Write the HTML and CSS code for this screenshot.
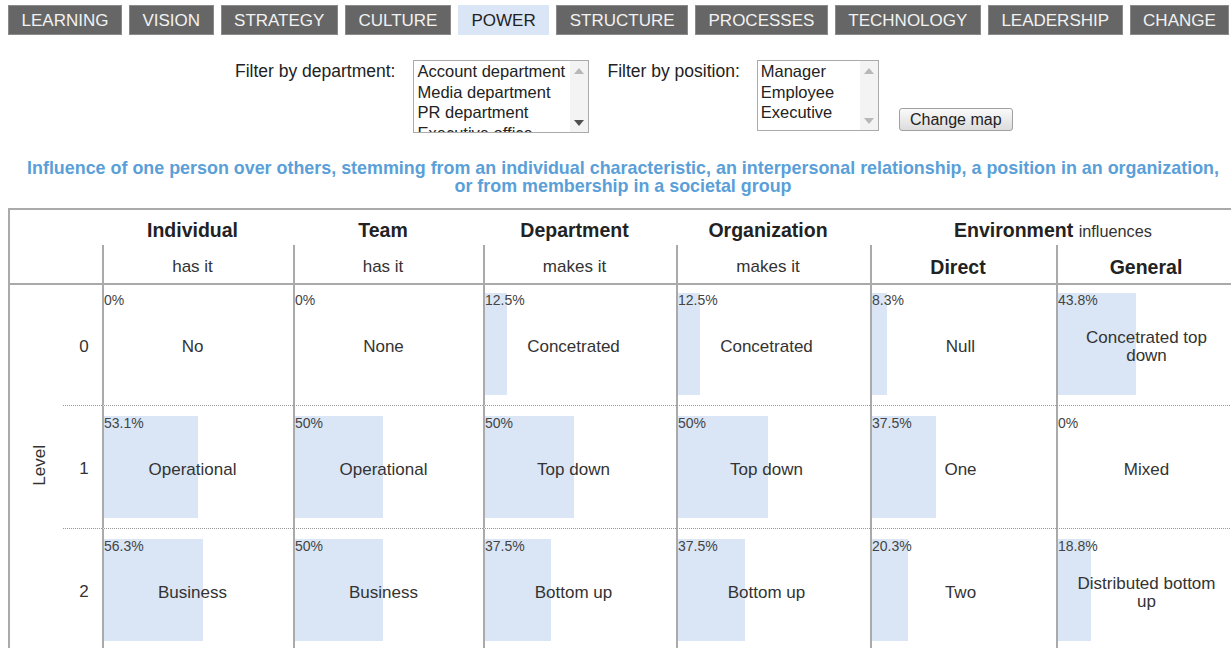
FILE: index.html
```html
<!DOCTYPE html>
<html lang="en">
<head>
<meta charset="utf-8">
<title>Power map</title>
<link rel="stylesheet" href="styles.css">
</head>
<body>
<div class="page">
  <nav class="tabs">
    <a class="tab">LEARNING</a>
    <a class="tab">VISION</a>
    <a class="tab">STRATEGY</a>
    <a class="tab">CULTURE</a>
    <a class="tab active">POWER</a>
    <a class="tab">STRUCTURE</a>
    <a class="tab">PROCESSES</a>
    <a class="tab">TECHNOLOGY</a>
    <a class="tab">LEADERSHIP</a>
    <a class="tab">CHANGE</a>
  </nav>

  <div class="filters">
    <span class="flabel">Filter by department:</span>
    <div class="listbox lb-dept">
      <ul class="items">
        <li>Account department</li>
        <li>Media department</li>
        <li>PR department</li>
        <li>Executive office</li>
      </ul>
      <div class="sbar">
        <svg class="arr up light" width="10" height="6" viewBox="0 0 10 6"><polygon points="0,6 5,0 10,6"/></svg>
        <svg class="arr down dark" width="10" height="6" viewBox="0 0 10 6"><polygon points="0,0 10,0 5,6"/></svg>
      </div>
    </div>
    <span class="flabel flabel-pos">Filter by position:</span>
    <div class="listbox lb-pos">
      <ul class="items">
        <li>Manager</li>
        <li>Employee</li>
        <li>Executive</li>
      </ul>
      <div class="sbar">
        <svg class="arr up light" width="10" height="6" viewBox="0 0 10 6"><polygon points="0,6 5,0 10,6"/></svg>
        <svg class="arr down light" width="10" height="6" viewBox="0 0 10 6"><polygon points="0,0 10,0 5,6"/></svg>
      </div>
    </div>
    <button class="btn">Change map</button>
  </div>

  <p class="intro">Influence of one person over others, stemming from an individual characteristic, an interpersonal relationship, a position in an organization,<br>or from membership in a societal group</p>

  <div class="map">
    <div class="level"><span class="vtext">Level</span></div>

    <div class="hd1 blank"></div>
    <div class="hd1">Individual</div>
    <div class="hd1">Team</div>
    <div class="hd1">Department</div>
    <div class="hd1">Organization</div>
    <div class="hd1 env"><b>Environment</b>&nbsp;<span class="small">influences</span></div>

    <div class="hd2 blank"></div>
    <div class="hd2">has it</div>
    <div class="hd2">has it</div>
    <div class="hd2">makes it</div>
    <div class="hd2">makes it</div>
    <div class="hd2 strong">Direct</div>
    <div class="hd2 strong">General</div>

    <div class="num first">0</div>
    <div class="cell first"><div class="box"><div class="bar" style="width:0px"></div><span class="pct">0%</span><span class="lbl">No</span></div></div>
    <div class="cell first"><div class="box"><div class="bar" style="width:0px"></div><span class="pct">0%</span><span class="lbl">None</span></div></div>
    <div class="cell first"><div class="box"><div class="bar" style="width:22px"></div><span class="pct">12.5%</span><span class="lbl">Concetrated</span></div></div>
    <div class="cell first"><div class="box"><div class="bar" style="width:22px"></div><span class="pct">12.5%</span><span class="lbl">Concetrated</span></div></div>
    <div class="cell first"><div class="box"><div class="bar" style="width:15px"></div><span class="pct">8.3%</span><span class="lbl">Null</span></div></div>
    <div class="cell first"><div class="box"><div class="bar" style="width:78px"></div><span class="pct">43.8%</span><span class="lbl">Concetrated top down</span></div></div>

    <div class="num">1</div>
    <div class="cell"><div class="box"><div class="bar" style="width:94px"></div><span class="pct">53.1%</span><span class="lbl">Operational</span></div></div>
    <div class="cell"><div class="box"><div class="bar" style="width:88px"></div><span class="pct">50%</span><span class="lbl">Operational</span></div></div>
    <div class="cell"><div class="box"><div class="bar" style="width:89px"></div><span class="pct">50%</span><span class="lbl">Top down</span></div></div>
    <div class="cell"><div class="box"><div class="bar" style="width:90px"></div><span class="pct">50%</span><span class="lbl">Top down</span></div></div>
    <div class="cell"><div class="box"><div class="bar" style="width:64px"></div><span class="pct">37.5%</span><span class="lbl">One</span></div></div>
    <div class="cell"><div class="box"><div class="bar" style="width:0px"></div><span class="pct">0%</span><span class="lbl">Mixed</span></div></div>

    <div class="num">2</div>
    <div class="cell"><div class="box"><div class="bar" style="width:99px"></div><span class="pct">56.3%</span><span class="lbl">Business</span></div></div>
    <div class="cell"><div class="box"><div class="bar" style="width:88px"></div><span class="pct">50%</span><span class="lbl">Business</span></div></div>
    <div class="cell"><div class="box"><div class="bar" style="width:66px"></div><span class="pct">37.5%</span><span class="lbl">Bottom up</span></div></div>
    <div class="cell"><div class="box"><div class="bar" style="width:67px"></div><span class="pct">37.5%</span><span class="lbl">Bottom up</span></div></div>
    <div class="cell"><div class="box"><div class="bar" style="width:36px"></div><span class="pct">20.3%</span><span class="lbl">Two</span></div></div>
    <div class="cell"><div class="box"><div class="bar" style="width:33px"></div><span class="pct">18.8%</span><span class="lbl">Distributed bottom up</span></div></div>
  </div>
</div>
</body>
</html>
```

FILE: styles.css
```css
html, body {
  margin: 0;
  padding: 0;
  overflow: hidden;
  background: #fff;
}

body {
  font-family: "Liberation Sans", Arial, sans-serif;
  color: #333;
}

.page {
  padding: 5px 0 0 8px;
  width: max-content;
}

/* Navigation tabs */
.tabs {
  display: flex;
  gap: 7px;
}

.tab {
  display: block;
  box-sizing: border-box;
  height: 30px;
  padding: 0 12.5px;
  border: 1px solid #8a8a8a;
  background: #666;
  color: #f2f2f2;
  font-size: 17px;
  line-height: 29px;
  white-space: nowrap;
}

.tab.active {
  background: #dae6f6;
  border-color: #dae6f6;
  color: #222;
}

/* Filters */
.filters {
  display: flex;
  align-items: flex-start;
  margin-top: 25px;
  padding-left: 227px;
}

.flabel {
  font-size: 17.5px;
  line-height: 20px;
  padding-top: 1px;
  color: #222;
  white-space: nowrap;
  margin-right: 18px;
}

.flabel-pos {
  margin-left: 18px;
  margin-right: 17px;
}

.listbox {
  box-sizing: border-box;
  display: flex;
  border: 1px solid #aaa;
  background: #fff;
  overflow: hidden;
}

.lb-dept {
  width: 176px;
  height: 73px;
}

.lb-pos {
  width: 122px;
  height: 71px;
}

.items {
  list-style: none;
  margin: 0;
  padding: 0 0 0 3px;
  flex: 1;
  font-size: 16.5px;
  line-height: 20.5px;
  color: #222;
  white-space: nowrap;
  overflow: hidden;
}

.sbar {
  width: 18px;
  background: #f3f3f3;
  display: flex;
  flex-direction: column;
  justify-content: space-between;
  align-items: center;
  padding: 7px 0 6px;
}

.arr.light { fill: #b8b8b8; }
.arr.dark { fill: #505050; }

.btn {
  box-sizing: border-box;
  margin-left: 20px;
  margin-top: 48px;
  width: 114px;
  height: 23px;
  padding: 0;
  border: 1px solid #a0a0a0;
  border-radius: 3px;
  background: linear-gradient(#fafafa, #dcdcdc);
  font-family: "Liberation Sans", Arial, sans-serif;
  font-size: 16px;
  color: #222;
}

/* Intro text */
.intro {
  margin: 26px 0 0 0;
  width: 1230px;
  text-align: center;
  font-size: 17.9px;
  line-height: 18px;
  font-weight: bold;
  color: #5a9fd8;
}

/* Map table */
.map {
  margin-top: 13px;
  display: grid;
  grid-template-columns: 53px 39px 191px 190px 193px 194px 186px 190px;
  border-top: 2px solid #aaa;
  border-left: 2px solid #aaa;
  width: max-content;
}

.level {
  grid-column: 1;
  grid-row: 3 / span 3;
  display: flex;
  align-items: center;
  justify-content: center;
  padding-left: 6px;
  padding-bottom: 6px;
}

.vtext {
  writing-mode: vertical-rl;
  transform: rotate(180deg);
  font-size: 17px;
  color: #333;
}

.hd1 {
  height: 35px;
  box-sizing: border-box;
  padding: 5px 12px 0 2px;
  display: flex;
  align-items: center;
  justify-content: center;
  font-size: 19.5px;
  font-weight: bold;
  color: #222;
  white-space: nowrap;
}

.hd1.blank,
.hd2.blank {
  grid-column: span 2;
  padding: 0;
}

.hd1.env {
  grid-column: span 2;
}

.hd1 .small {
  font-weight: normal;
  font-size: 16.3px;
  color: #333;
  padding-top: 2px;
}

.hd2 {
  height: 40px;
  box-sizing: border-box;
  border-left: 2px solid #aaa;
  border-bottom: 2px solid #aaa;
  padding: 6px 12px 0 0;
  display: flex;
  align-items: center;
  justify-content: center;
  font-size: 17px;
  color: #333;
  white-space: nowrap;
}

.hd2.blank {
  border-left: none;
}

.hd2.strong {
  font-size: 19.5px;
  font-weight: bold;
  color: #222;
}

.num {
  display: flex;
  align-items: center;
  justify-content: center;
  padding-top: 4px;
  padding-left: 3px;
  border-bottom: 1px dotted #999;
  font-size: 17px;
  color: #333;
}

.cell {
  border-left: 2px solid #aaa;
  border-bottom: 1px dotted #999;
  padding: 10px 12px 10px 0;
}

.cell.first {
  padding-top: 8px;
}

.box {
  width: 177px;
  height: 102px;
  display: grid;
  grid-template-columns: 100%;
  grid-template-rows: 100%;
}

.bar {
  grid-area: 1 / 1;
  justify-self: start;
  height: 100%;
  background: #dae6f6;
}

.pct {
  grid-area: 1 / 1;
  align-self: start;
  justify-self: start;
  font-size: 14px;
  line-height: 15px;
  color: #444;
}

.lbl {
  grid-area: 1 / 1;
  align-self: center;
  margin-top: 6px;
  padding: 0 8px;
  text-align: center;
  font-size: 17px;
  line-height: 18px;
  color: #333;
}
```
